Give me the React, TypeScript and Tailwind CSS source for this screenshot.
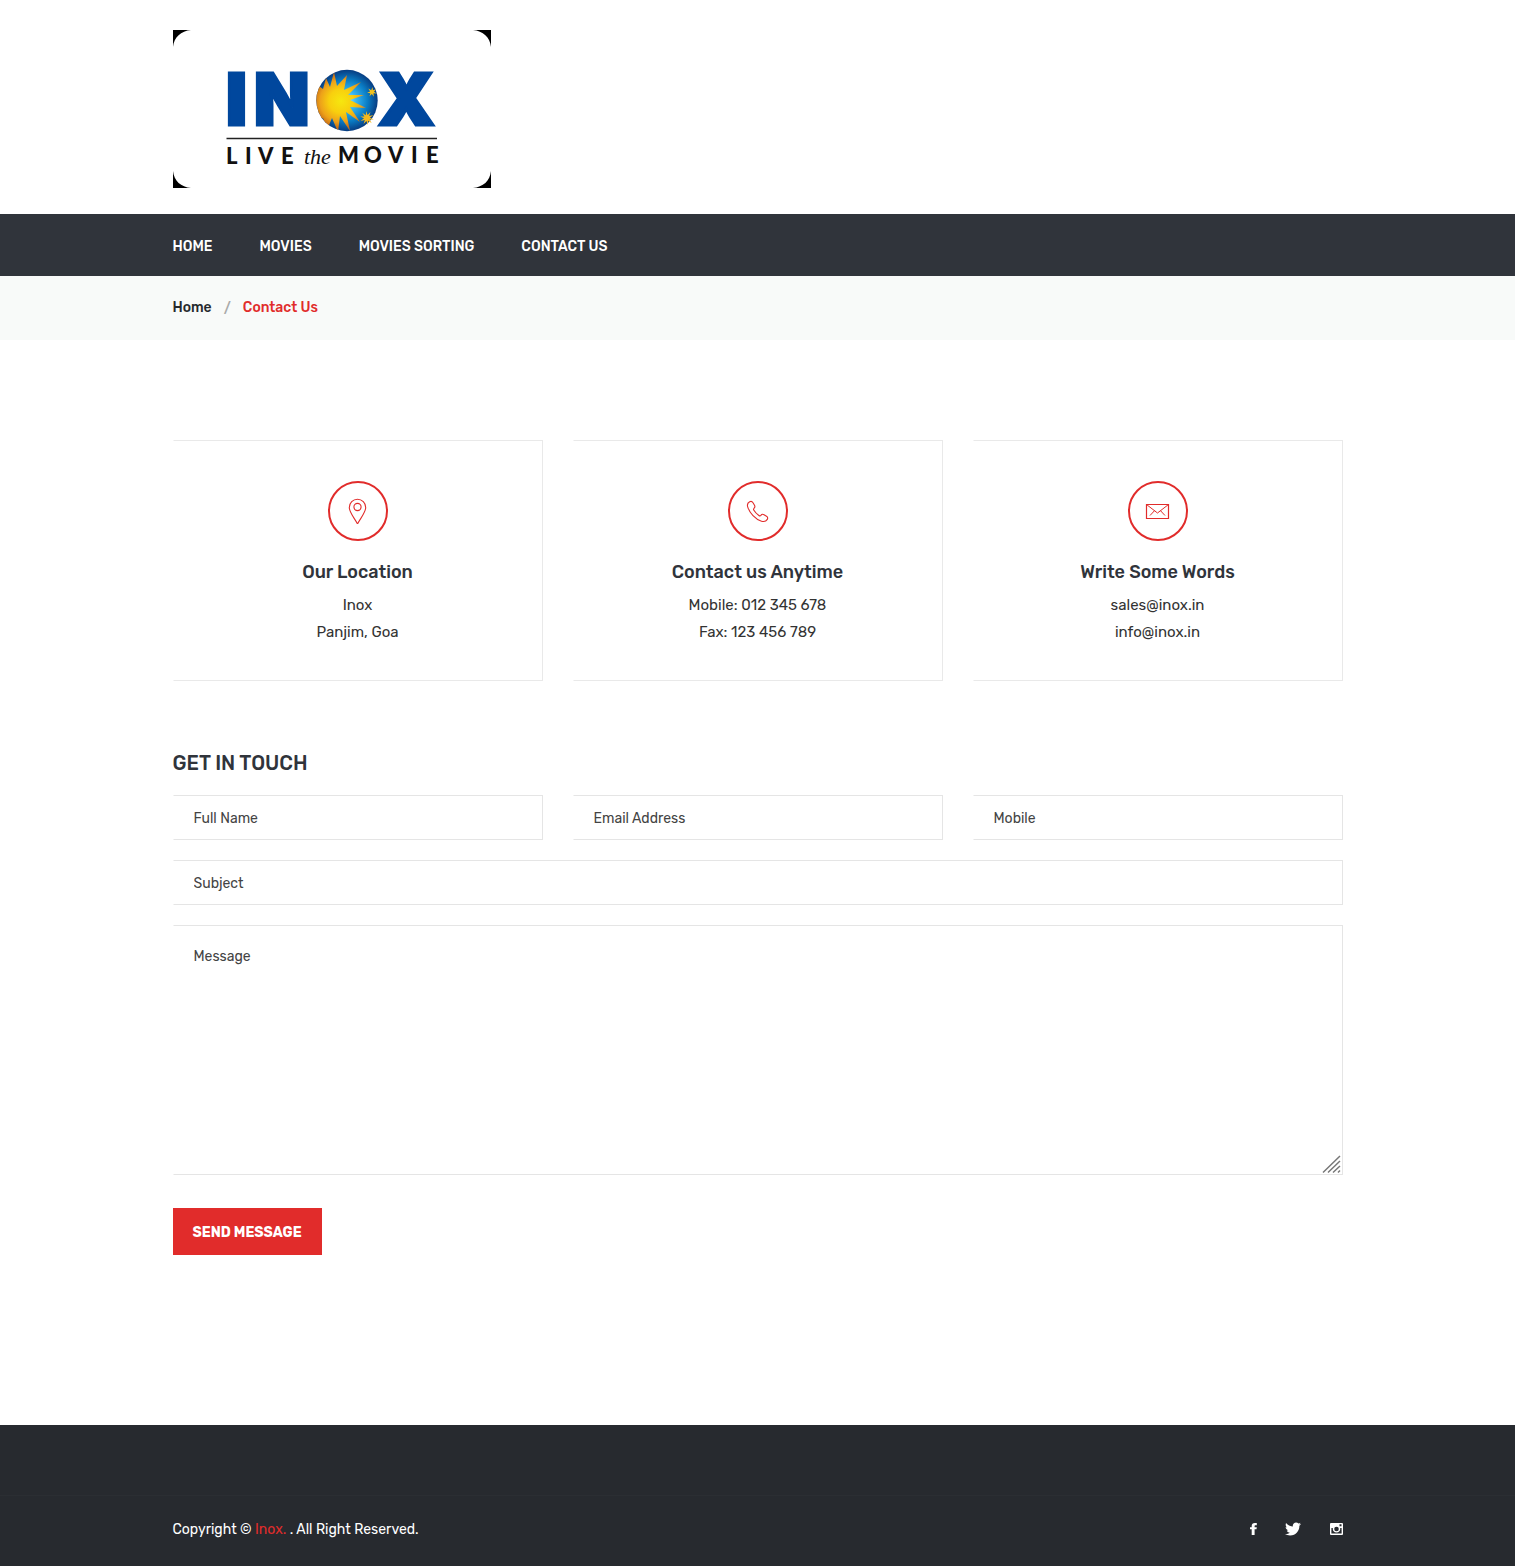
import type { ReactNode } from "react";
import { FaTwitter } from "react-icons/fa";

const container = "mx-auto w-full max-w-[1200px] px-[15px]";
const field =
  "block w-full border border-[#e5e5e5] border-l-transparent bg-white px-5 text-sm text-[#444444] placeholder:text-[#444444] placeholder:opacity-100 focus:outline-none";

function Star({ cx, cy, outer, inner, points, fill, turn = 0 }: {
  cx: number; cy: number; outer: number; inner: number; points: number; fill: string; turn?: number;
}) {
  const path = Array.from({ length: points * 2 }, (_, i) => {
    const r = i % 2 ? inner : outer;
    const a = (Math.PI * i) / points + turn;
    return `${(cx + r * Math.cos(a)).toFixed(2)},${(cy + r * Math.sin(a)).toFixed(2)}`;
  }).join(" ");
  return <polygon points={path} fill={fill} />;
}

function Logo() {
  return (
    <svg viewBox="0 0 318 158" className="block h-[158px] w-[318px]" role="img" aria-label="Inox, live the movie">
      <defs>
        <radialGradient id="sky" cx="0.5" cy="0.5" r="0.52">
          <stop offset="0" stopColor="#9be0fd" />
          <stop offset="0.3" stopColor="#35b4f0" />
          <stop offset="0.65" stopColor="#0a7cc4" />
          <stop offset="1" stopColor="#073479" />
        </radialGradient>
        <radialGradient id="sun" gradientUnits="userSpaceOnUse" cx="168" cy="71" r="30">
          <stop offset="0" stopColor="#f6e70f" />
          <stop offset="0.4" stopColor="#f8cf0e" />
          <stop offset="0.7" stopColor="#eda11a" />
          <stop offset="0.9" stopColor="#c96f16" />
        </radialGradient>
        <clipPath id="globe">
          <circle cx="174" cy="70.500" r="30.700" />
        </clipPath>
      </defs>
      <path d="M0 0H18C8 1 1 7 0 17ZM318 0H300C310 1 317 7 318 17ZM0 158H18C8 157 1 151 0 141ZM318 158H300C310 157 317 151 318 141Z" fill="#000" />
      <g fill="#00479d" stroke="#00479d" strokeWidth="3" fontFamily="Inter, sans-serif" fontWeight="900" fontSize="72">
        <text x="53" y="95">I</text>
        <text x="81" y="95">N</text>
        <text x="205" y="95">X</text>
      </g>
      <circle cx="174" cy="70.500" r="30.700" fill="url(#sky)" />
      <g clipPath="url(#globe)">
        <path
          d="M140 57L146 56L150 59L153 48L157 57L161 42L164 56L174 45L171 60L188 52L175 65L191 65L177 70L193 78L177 77L187 92L173 82L177 101L167 86L165 102L159 88L154 100L150 88L140 95Z"
          fill="url(#sun)"
        />
      </g>
      <Star cx={199} cy={62} outer={5} inner={2} points={7} fill="#f4c21c" turn={0.3} />
      <Star cx={194} cy={88} outer={7} inner={3} points={10} fill="#f4b81c" turn={0.2} />
      <path d="M53.500 108.500H264" stroke="#222" strokeWidth="1.500" />
      <g fill="#111" fontFamily="Lato, sans-serif" fontWeight="900" fontSize="22">
        <text x="53 72 85 108" y="134">LIVE</text>
        <text x="165 191 215 238 253" y="133">MOVIE</text>
      </g>
      <text x="131" y="134" fill="#111" fontFamily="Liberation Serif, serif" fontStyle="italic" fontSize="22">the</text>
    </svg>
  );
}

function PinIcon() {
  return (
    <svg viewBox="0 0 26 26" className="size-[26px]" fill="none" stroke="currentColor" strokeWidth="1.100" aria-hidden="true">
      <path d="M12.500 26C10 20.700 4.300 14.700 4.300 9.400a8.200 8.200 0 0 1 16.400 0C20.700 14.700 15 20.700 12.500 26Z" strokeLinejoin="round" />
      <circle cx="12.500" cy="9" r="3.600" />
    </svg>
  );
}

function PhoneIcon() {
  return (
    <svg viewBox="0 0 26 26" className="size-[26px]" fill="none" stroke="currentColor" strokeWidth="1.100" aria-hidden="true">
      <path d="M4.700 3.700C2.700 4.700 2 6.500 2.700 8.800C4.500 15 10.500 21.500 16.500 23.200C19 23.900 21.200 23.200 22.300 21.400C23 20 22.700 18.900 21.500 18.200L19 16.700C17.600 15.900 16.600 16.300 15.900 17.400C15.300 18.100 14.600 18 13.900 17.500C12 16.200 10.100 14.300 8.900 12.300C8.400 11.500 8.300 10.900 9 10.300C10 9.500 10.200 8.600 9.500 7.300L8 4.700C7.200 3.400 6 3.100 4.700 3.700Z" />
    </svg>
  );
}

function MailIcon() {
  return (
    <svg viewBox="0 0 26 26" className="size-[26px]" fill="none" stroke="currentColor" aria-hidden="true">
      <path d="M1.500 6.500H23.500V20.500H1.500Z" strokeWidth="1.200" />
      <path d="M1.500 6.500L12.500 15L23.500 6.500M9.500 12.700L5 17.500M15.500 12.700L20 17.500" />
    </svg>
  );
}

function FacebookIcon() {
  return (
    <svg viewBox="0 0 7 12" className="h-3 w-[7px]" fill="currentColor" aria-hidden="true">
      <path d="M6.800 0.100V2.200H5.600C4.800 2.200 4.600 2.500 4.600 3V4.200H6.800L6.500 6.300H4.600V12H1.700V6.300H0V4.200H1.700V2.900C1.700 1.100 2.800 0 4.800 0Z" />
    </svg>
  );
}

function InstagramIcon() {
  return (
    <svg viewBox="0 0 14 14" className="size-[14px]" aria-hidden="true">
      <path fillRule="evenodd" fill="currentColor" d="M2 1H13Q14 1 14 2V12Q14 13 13 13H2Q1 13 1 12V2Q1 1 2 1ZM10.500 2.300V4.200H12.500V2.300ZM2.400 6V11.600H12.600V6H11.100A3.700 3.700 0 1 1 3.900 6ZM7.500 4.700A2.300 2.300 0 1 0 7.500 9.300A2.300 2.300 0 1 0 7.500 4.700Z" />
    </svg>
  );
}

function InfoCard({ icon, title, lines }: { icon: ReactNode; title: string; lines: string[] }) {
  return (
    <article className="flex flex-col items-center border border-[#e9e9e9] border-l-transparent pt-10 pb-[34px] text-center">
      <div className="flex size-[60px] items-center justify-center rounded-full border-2 border-[#e12c2b] text-[#e12c2b]">{icon}</div>
      <h2 className="mt-[18px] mb-[7px] text-lg leading-[26px] font-medium text-[#30343b]">{title}</h2>
      {lines.map((line) => (
        <p key={line} className="text-[15px] leading-[27px] text-[#333333]">{line}</p>
      ))}
    </article>
  );
}

export default function App() {
  return (
    <div className="bg-white font-[Rubik,Roboto,sans-serif]">
      <header>
        <div className={container}>
          <a href="#" className="inline-block pt-[30px] pb-[26px] align-top"><Logo /></a>
        </div>
        <nav className="bg-[#30343b]">
          <ul className={`${container} flex h-[62px] items-center gap-[47px] pt-1 text-sm font-medium text-white`}>
            {["HOME", "MOVIES", "MOVIES SORTING", "CONTACT US"].map((item) => (
              <li key={item}><a href="#">{item}</a></li>
            ))}
          </ul>
        </nav>
      </header>
      <nav aria-label="Breadcrumb" className="bg-[#f8faf9]">
        <ol className={`${container} flex h-16 items-center text-sm font-medium text-[#26292d]`}>
          <li><a href="#">Home</a></li>
          <li aria-hidden="true" className="px-3 pt-[2px] text-[#aaaaaa]">/</li>
          <li aria-current="page" className="text-[#e12c2b]">Contact Us</li>
        </ol>
      </nav>
      <main className={`${container} pt-[100px] pb-[170px]`}>
        <section className="grid grid-cols-3 gap-[30px]">
          <InfoCard icon={<PinIcon />} title="Our Location" lines={["Inox", "Panjim, Goa"]} />
          <InfoCard icon={<PhoneIcon />} title="Contact us Anytime" lines={["Mobile: 012 345 678", "Fax: 123 456 789"]} />
          <InfoCard icon={<MailIcon />} title="Write Some Words" lines={["sales@inox.in", "info@inox.in"]} />
        </section>
        <form className="pt-[68px]" onSubmit={(e) => e.preventDefault()}>
          <h2 className="mb-[18px] text-xl leading-7 font-medium text-[#30343b]">GET IN TOUCH</h2>
          <div className="grid grid-cols-3 gap-x-[30px] gap-y-5">
            <input aria-label="Full Name" placeholder="Full Name" className={`${field} h-[45px] pt-[2px]`} />
            <input aria-label="Email Address" type="email" placeholder="Email Address" className={`${field} h-[45px] pt-[2px]`} />
            <input aria-label="Mobile" type="tel" placeholder="Mobile" className={`${field} h-[45px] pt-[2px]`} />
            <input aria-label="Subject" placeholder="Subject" className={`${field} col-span-3 h-[45px] pt-[2px]`} />
            <div className="relative col-span-3">
              <textarea aria-label="Message" placeholder="Message" className={`${field} h-[250px] resize-y py-[21px]`} />
              <svg viewBox="0 0 20 20" className="pointer-events-none absolute right-px bottom-px size-5 bg-white" fill="none" stroke="#777" strokeWidth="1.500" aria-hidden="true">
                <path d="M1 18.500L18 2M6 18.500L18 7M11 18.500L18 12M16 18.500L18 16.500" />
              </svg>
            </div>
          </div>
          <button type="submit" className="mt-[33px] h-[47px] bg-[#e12c2b] px-5 pt-[2px] text-sm font-bold text-white">SEND MESSAGE</button>
        </form>
      </main>
      <footer className="bg-[#272a2f] pt-[70px]">
        <div className="border-t border-[#2b2e33]">
          <div className={`${container} flex h-[70px] items-center justify-between pb-1 text-white`}>
            <p className="pt-[2px] text-sm">Copyright © <a href="#" className="text-[#e12c2b]">Inox.</a> . All Right Reserved.</p>
            <div className="flex items-center gap-7">
              <a href="#" aria-label="Facebook"><FacebookIcon /></a>
              <a href="#" aria-label="Twitter"><FaTwitter className="size-4" /></a>
              <a href="#" aria-label="Instagram"><InstagramIcon /></a>
            </div>
          </div>
        </div>
      </footer>
    </div>
  );
}
